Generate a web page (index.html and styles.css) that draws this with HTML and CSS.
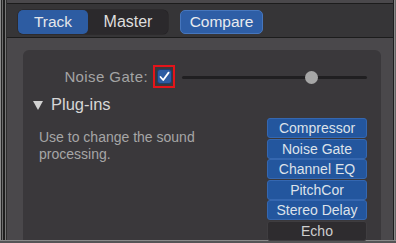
FILE: index.html
```html
<!DOCTYPE html>
<html lang="en">
<head>
    <meta charset="UTF-8">
    <meta name="viewport" content="width=device-width, initial-scale=1.0">
    <title>Track Settings</title>
    <link rel="stylesheet" href="styles.css">
</head>
<body>
    <div class="screen">
        <div class="toolbar">
            <div class="segmented">
                <button class="seg seg-track active">Track</button>
                <button class="seg seg-master">Master</button>
            </div>
            <button class="compare">Compare</button>
        </div>

        <div class="main">
            <div class="panel">
                <!-- noise gate row -->
                <div class="gate-row">
                    <span class="gate-label">Noise Gate:</span>
                    <span class="highlight">
                        <span class="checkbox">
                            <svg width="11" height="11" viewBox="0 0 11 11">
                                <polyline points="1.5,6 4.2,9 9.6,1.6" fill="none" stroke="#ffffff" stroke-width="1.8" stroke-linecap="round" stroke-linejoin="round"/>
                            </svg>
                        </span>
                    </span>
                    <div class="slider">
                        <div class="track"></div>
                        <div class="thumb" style="left: 70%"></div>
                    </div>
                </div>

                <div class="heading">
                    <span class="triangle"></span>
                    <span>Plug-ins</span>
                </div>

                <div class="plugins">
                    <p class="desc">Use to change the sound processing.</p>
                    <div class="plugin-list">
                        <button class="plugin on">Compressor</button>
                        <button class="plugin on">Noise Gate</button>
                        <button class="plugin on">Channel EQ</button>
                        <button class="plugin on">PitchCor</button>
                        <button class="plugin on">Stereo Delay</button>
                        <button class="plugin">Echo</button>
                    </div>
                </div>
            </div>
        </div>
    </div>
</body>
</html>
```

FILE: styles.css
```css
body {
    margin: 0;
    width: 396px;
    height: 243px;
    overflow: hidden;
    background-color: #555456;
    font-family: "Liberation Sans", Arial, sans-serif;
}

button {
    font-family: inherit;
    margin: 0;
    padding: 0;
    cursor: pointer;
}

.screen {
    height: 240px;
    padding: 0 3px 0 7px;
    display: flex;
    flex-direction: column;
    background-color: #4a484b;
    border-bottom: 1px solid #8a8a8a;
    box-shadow:
        inset 1px 0 0 #8c8c8c,
        inset 2px 0 0 #262626,
        inset 3px 0 0 #6c6c6c,
        inset 5px 0 0 #1e1e1e,
        inset 6px 0 0 #777777,
        inset 7px 0 0 #2e2e2e,
        inset -1px 0 0 #666666,
        inset -2px 0 0 #8a8a8a,
        inset -3px 0 0 #1e1e1e;
}

/* top bar */
.toolbar {
    margin-top: 3px;
    height: 35px;
    padding: 6px 0 0 11px;
    box-sizing: border-box;
    display: flex;
    align-items: flex-start;
    gap: 12px;
    background-color: #363537;
    border-top: 1px solid #1c1c1c;
    border-bottom: 1px solid #1c1c1c;
}

.segmented {
    display: flex;
    height: 24px;
    background-color: #2b292c;
    border-radius: 5px;
    box-shadow: 0 0 0 0.5px #242225;
}

.seg {
    height: 24px;
    border: none;
    border-radius: 5px;
    background: transparent;
    color: #dedede;
    font-size: 15.5px;
}

.seg-track {
    width: 70px;
}

.seg-master {
    width: 80px;
    font-size: 16px;
}

.seg.active {
    background-color: #2d5ca2;
    color: #e4e6ea;
}

.compare {
    width: 83px;
    height: 24px;
    border: 1px solid #4676bd;
    border-radius: 5px;
    background-color: #2e5ea6;
    color: #e8eaee;
    font-size: 15.5px;
}

/* content */
.main {
    flex: 1;
    padding: 12px 12px 0 16px;
    display: flex;
    min-height: 0;
}

.panel {
    flex: 1;
    background-color: #3a383b;
    border-radius: 6px 6px 0 0;
    padding: 15px 14px 0 0;
}

.gate-row {
    display: flex;
    align-items: center;
    height: 23px;
}

.gate-label {
    width: 125px;
    text-align: right;
    color: #a4a4a4;
    font-size: 15px;
    letter-spacing: 0.4px;
    margin-right: 5px;
}

.highlight {
    width: 22px;
    height: 23px;
    box-sizing: border-box;
    border: 2px solid #e4141a;
    display: flex;
    align-items: center;
    justify-content: center;
    margin-right: 7px;
}

.checkbox {
    width: 15px;
    height: 15px;
    box-sizing: border-box;
    border: 1px solid #1d3e6e;
    border-radius: 3px;
    background-color: #2d5ca2;
    display: flex;
    align-items: center;
    justify-content: center;
}

.slider {
    flex: 1;
    position: relative;
    height: 14px;
    margin-top: 2px;
    display: flex;
    align-items: center;
}

.track {
    width: 100%;
    height: 3px;
    border-radius: 2px;
    background-color: #201f21;
}

.thumb {
    position: absolute;
    top: 0;
    width: 13px;
    height: 13px;
    margin-left: -6.5px;
    border-radius: 50%;
    background-color: #a6a6a6;
}

.heading {
    display: flex;
    align-items: center;
    gap: 8px;
    height: 20px;
    margin-top: 6px;
    padding-left: 10px;
    color: #d6d6d6;
    font-size: 16.5px;
}

.triangle {
    width: 0;
    height: 0;
    border-left: 5.5px solid transparent;
    border-right: 5.5px solid transparent;
    border-top: 9px solid #d2d2d2;
    margin-top: 2px;
}

.plugins {
    display: flex;
    justify-content: space-between;
    margin-top: 4px;
}

.desc {
    margin: 11px 0 0 16px;
    width: 170px;
    color: #a6a6a6;
    font-size: 14px;
    line-height: 17px;
}

.plugin-list {
    display: flex;
    flex-direction: column;
    gap: 0.5px;
    width: 100px;
}

.plugin {
    height: 20px;
    border: 1px solid #3f3d40;
    border-radius: 3px;
    background-color: #2e2c2f;
    color: #cfcfcf;
    font-size: 14px;
}

.plugin.on {
    background-color: #23569e;
    border-color: #3567b0;
    color: #dde2ea;
}
```
